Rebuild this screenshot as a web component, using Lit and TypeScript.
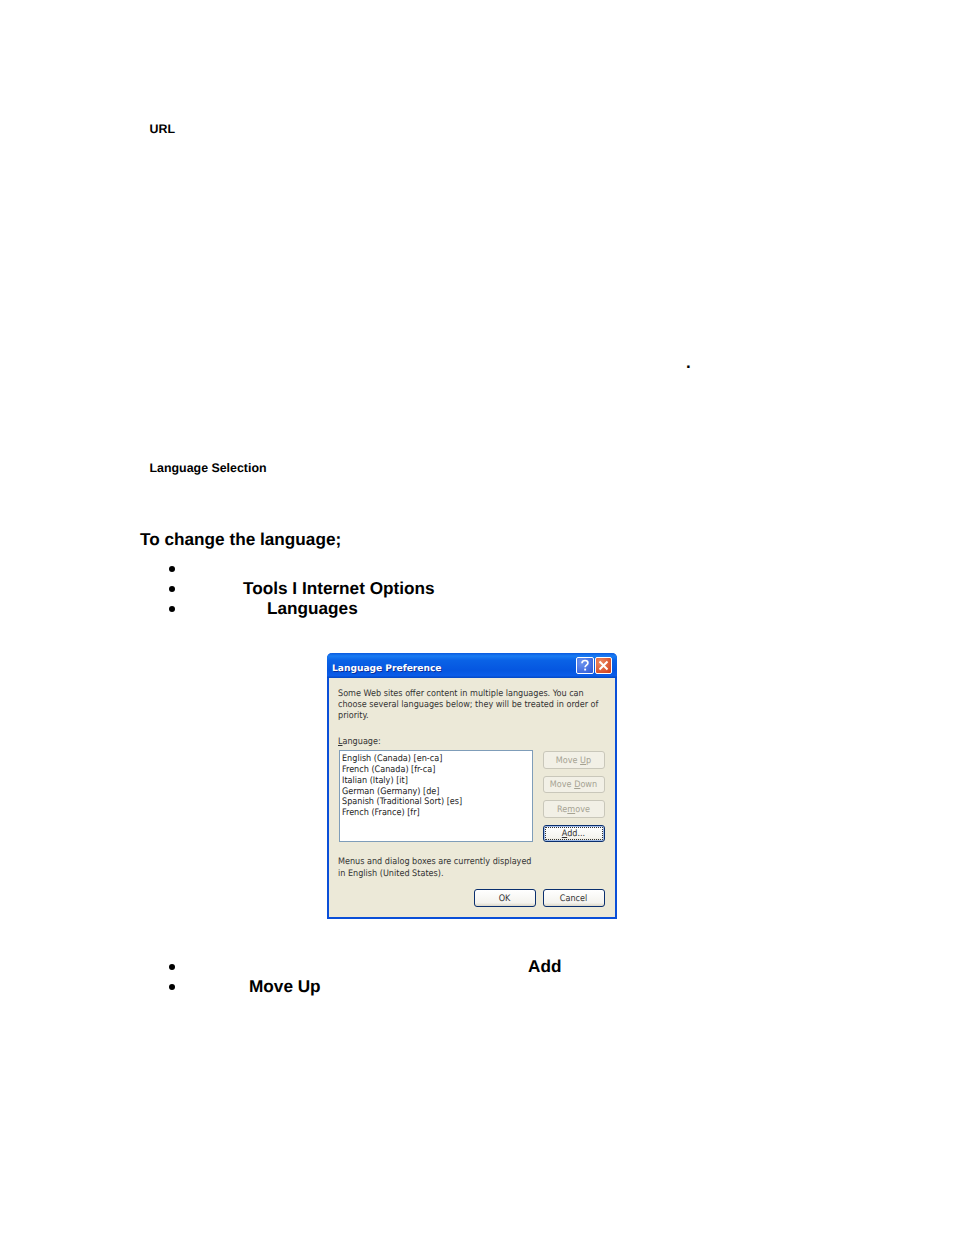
import { LitElement, html, css } from "lit";
import { customElement } from "lit/decorators.js";

@customElement("app-root")
export class AppRoot extends LitElement {
  static styles = css`
    :host { display: block; width: 954px; height: 1235px; background: #fff; color: #000; font-family: "Liberation Sans", Arial, sans-serif; overflow: hidden; text-rendering: geometricPrecision; }
    .page { display: flex; flex-direction: column; padding: 122px 0 0 140px; }
    .cap { font-size: 12.4px; font-weight: 700; line-height: 14px; margin-left: 9.5px; }
    .dot { font-size: 17px; font-weight: 700; line-height: 18px; margin: 218px 0 0 546px; }
    .cap2 { margin-top: 89px; }
    h2 { font-size: 17.2px; font-weight: 700; line-height: 20px; margin: 54px 0 0 0; }
    ul { list-style: none; margin: 0; padding: 0; display: flex; flex-direction: column; }
    ul.a { margin-top: 10px; }
    ul.b { margin-top: 38px; }
    li { display: flex; height: 20px; line-height: 18px; font-size: 17.2px; font-weight: 700; position: relative; }
    li::before { content: ""; width: 6px; height: 6px; border-radius: 50%; background: #000; margin: 7px 0 0 29px; flex: none; }
    .i1 { margin-left: 68px; }
    .i2 { margin-left: 92px; }
    .i3 { margin-left: 353px; }
    .i4 { margin-left: 74px; }

    .dlg { width: 290px; height: 266px; box-sizing: border-box; margin: 34px 0 0 187px; border: 2px solid #0a4fd8; border-top: 0; border-radius: 5px 5px 0 0; background: #ece9d8; display: flex; flex-direction: column; font-family: "DejaVu Sans", "Noto Sans", sans-serif; font-stretch: condensed; font-size: 9px; color: #333; }
    .title { height: 25px; margin: 0 -2px; flex: none; border-radius: 5px 5px 0 0; background: linear-gradient(180deg, #0a5ae0 0%, #1a7cf2 12%, #0a62e6 30%, #0556e0 70%, #0a5ce8 90%, #0347c4 100%); display: flex; align-items: center; padding: 0 5px 0 5px; gap: 1px; box-sizing: border-box; }
    .title b { flex: 1; color: #fff; font-family: "DejaVu Sans", sans-serif; font-stretch: normal; font-size: 9.1px; font-weight: 700; text-shadow: 1px 1px 0 #0a2f9a; padding-top: 6px; }
    .tb { width: 17px; height: 17px; box-sizing: border-box; border: 1px solid #fff; border-radius: 2px; display: block; }
    .tb svg { display: block; }
    .help { width: 18px; background: radial-gradient(circle at 30% 30%, #6f95ee, #2a55d6); }
    .close { background: radial-gradient(circle at 30% 30%, #ee8a62, #cf3a18); }
    .body { flex: 1; display: flex; flex-direction: column; padding: 11px 10px 0 9px; }
    p { margin: 0; line-height: 11px; white-space: nowrap; }
    .lang { margin-top: 15px; }
    .mid { display: flex; justify-content: space-between; margin-top: 2px; padding: 0 0 0 1px; }
    .list { width: 194px; height: 92px; box-sizing: border-box; border: 1px solid #7f9db9; background: #fff; padding: 3px 2px; color: #222; }
    .list div { line-height: 10.85px; white-space: nowrap; }
    .btns { display: flex; flex-direction: column; gap: 7px; padding-top: 1px; }
    .btn { width: 62px; height: 17.5px; box-sizing: border-box; border: 1px solid #0a2f6e; border-radius: 3px; background: linear-gradient(180deg, #fff, #f4f3ee 80%, #dcd8c8); display: flex; align-items: center; justify-content: center; line-height: 1; padding: 3px 1px 0 0; }
    .btn.off { border-color: #c9c7ba; background: #f2f0e6; color: #a5a292; }
    .btn.def { box-shadow: inset 0 0 0 1px #9fbbe8; outline: 1px dotted #333; outline-offset: -3px; }
    u { text-decoration-thickness: 1px; text-underline-offset: 1px; }
    .note { margin-top: 15px; }
    .note + p { margin-top: 1px; }
    .foot { display: flex; justify-content: flex-end; gap: 7px; margin-top: 9px; }
    .foot .btn { height: 18px; }
  `;

  render() {
    return html`<div class="page">
      <div class="cap">URL</div>
      <div class="dot">.</div>
      <div class="cap cap2">Language Selection</div>
      <h2>To change the language;</h2>
      <ul class="a">
        <li></li>
        <li><span class="i1">Tools I Internet Options</span></li>
        <li><span class="i2">Languages</span></li>
      </ul>
      <div class="dlg">
        <div class="title">
          <b>Language Preference</b>
          <span class="tb help"><svg width="16" height="15" viewBox="0 0 16 15"><path d="M5 5.2C5 3.4 6.3 2.5 8 2.5s2.9.9 2.9 2.4c0 2.2-2.8 2.2-2.8 4.4" fill="none" stroke="#fff" stroke-width="1.7"/><rect x="7.2" y="10.6" width="1.9" height="1.9" fill="#fff"/></svg></span>
          <span class="tb close"><svg width="15" height="15" viewBox="0 0 15 15"><path d="M3.5 3.5l8 8M11.5 3.5l-8 8" fill="none" stroke="#fff" stroke-width="2"/></svg></span>
        </div>
        <div class="body">
          <p>Some Web sites offer content in multiple languages. You can</p>
          <p>choose several languages below; they will be treated in order of</p>
          <p>priority.</p>
          <p class="lang"><u>L</u>anguage:</p>
          <div class="mid">
            <div class="list">
              <div>English (Canada) [en-ca]</div>
              <div>French (Canada) [fr-ca]</div>
              <div>Italian (Italy) [it]</div>
              <div>German (Germany) [de]</div>
              <div>Spanish (Traditional Sort) [es]</div>
              <div>French (France) [fr]</div>
            </div>
            <div class="btns">
              <div class="btn off"><span>Move <u>U</u>p</span></div>
              <div class="btn off"><span>Move <u>D</u>own</span></div>
              <div class="btn off"><span>Re<u>m</u>ove</span></div>
              <div class="btn def"><span><u>A</u>dd...</span></div>
            </div>
          </div>
          <p class="note">Menus and dialog boxes are currently displayed</p>
          <p>in English (United States).</p>
          <div class="foot">
            <div class="btn"><span>OK</span></div>
            <div class="btn"><span>Cancel</span></div>
          </div>
        </div>
      </div>
      <ul class="b">
        <li><span class="i3">Add</span></li>
        <li><span class="i4">Move Up</span></li>
      </ul>
    </div>`;
  }
}
